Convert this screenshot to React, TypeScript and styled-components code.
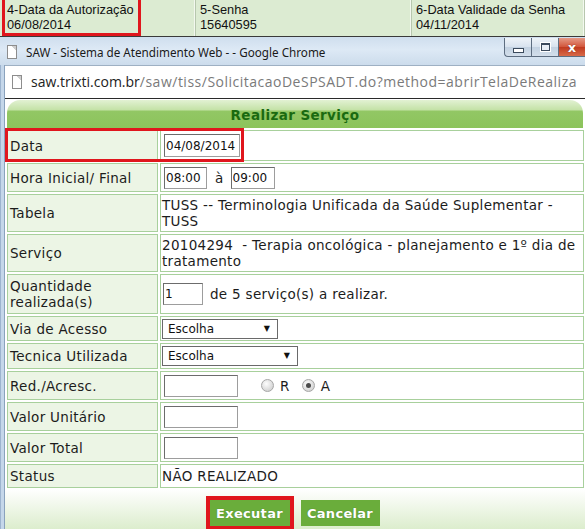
import styled, { createGlobalStyle } from 'styled-components';

const GlobalStyle = createGlobalStyle`
  html, body {
    margin: 0;
    padding: 0;
  }
  body {
    width: 585px;
    height: 529px;
    overflow: hidden;
    background: #fff;
    font-family: "DejaVu Sans", Verdana, sans-serif;
  }
`;

const rows = [
  { label: 'Tabela', h: 38, text: <>TUSS -- Terminologia Unificada da Saúde Suplementar -<br />TUSS</> },
  { label: 'Serviço', h: 38, text: <>20104294&nbsp; - Terapia oncológica - planejamento e 1º dia de<br />tratamento</> },
];

export default function App() {
  return (
    <Page>
      <GlobalStyle />
      <InfoStrip>
        <InfoCell $first>4-Data da Autorização<br />06/08/2014</InfoCell>
        <InfoCell>5-Senha<br />15640595</InfoCell>
        <InfoCell>6-Data Validade da Senha<br />04/11/2014</InfoCell>
      </InfoStrip>

      <Window>
        <TitleBar>
          <TitleText>
            <PageIcon />
            SAW - Sistema de Atendimento Web - - Google Chrome
          </TitleText>
          <Controls>
            <CtrlButton><MinGlyph /></CtrlButton>
            <CtrlButton><MaxGlyph /></CtrlButton>
            <CtrlButton $close><CloseGlyph>x</CloseGlyph></CtrlButton>
          </Controls>
        </TitleBar>

        <FrameBody>
          <AddressBar>
            <PageIcon />
            <Url>
              <span>saw.trixti.com.br</span>
              <UrlPath>/saw/tiss/SolicitacaoDeSPSADT.do?method=abrirTelaDeRealiza</UrlPath>
            </Url>
          </AddressBar>

          <Content>
            <Header>Realizar Serviço</Header>
            <FormTable>
              <tbody>
                <Row $h={31}>
                  <Label>Data</Label>
                  <Value><TextInput $w={76} $hh={23} defaultValue="04/08/2014" /></Value>
                </Row>
                <Row $h={29}>
                  <Label>Hora Inicial/ Final</Label>
                  <Value>
                    <TextInput $w={43} defaultValue="08:00" />
                    <Between>à</Between>
                    <TextInput $w={44} $m={0} defaultValue="09:00" />
                  </Value>
                </Row>
                {rows.map((r) => (
                  <Row key={r.label} $h={r.h}>
                    <Label>{r.label}</Label>
                    <Value>{r.text}</Value>
                  </Row>
                ))}
                <Row $h={40}>
                  <Label>Quantidade realizada(s)</Label>
                  <Value>
                    <TextInput $w={40} $m={1} defaultValue="1" />
                    <After>de 5 serviço(s) a realizar.</After>
                  </Value>
                </Row>
                <Row $h={25}>
                  <Label>Via de Acesso</Label>
                  <Value>
                    <SelectBox $w={116}>Escolha<Arrow>▼</Arrow></SelectBox>
                  </Value>
                </Row>
                <Row $h={26}>
                  <Label>Tecnica Utilizada</Label>
                  <Value>
                    <SelectBox $w={136}>Escolha<Arrow>▼</Arrow></SelectBox>
                  </Value>
                </Row>
                <Row $h={29}>
                  <Label>Red./Acresc.</Label>
                  <Value>
                    <TextInput $w={74} />
                    <RadioGroup>
                      <Radio />
                      <RadioLabel>R</RadioLabel>
                      <Radio $checked />
                      <RadioLabel>A</RadioLabel>
                    </RadioGroup>
                  </Value>
                </Row>
                <Row $h={29}>
                  <Label>Valor Unitário</Label>
                  <Value><TextInput $w={74} /></Value>
                </Row>
                <Row $h={29}>
                  <Label>Valor Total</Label>
                  <Value><TextInput $w={74} /></Value>
                </Row>
                <Row $h={24}>
                  <Label>Status</Label>
                  <Value>NÃO REALIZADO</Value>
                </Row>
              </tbody>
            </FormTable>
            <ButtonBar>
              <ActionButton $w={80} $highlight>Executar</ActionButton>
              <ActionButton $w={79}>Cancelar</ActionButton>
            </ButtonBar>
          </Content>
        </FrameBody>
      </Window>

      <Marker $left={2} $top={-3} $w={139} $h={39} />
      <Marker $left={5} $top={128} $w={239} $h={34} />
    </Page>
  );
}

const Page = styled.div`
  position: relative;
  width: 585px;
  height: 529px;
  overflow: hidden;
`;

/* tela de trás */
const InfoStrip = styled.div`
  display: grid;
  grid-template-columns: 196px 216px 1fr;
  height: 36px;
  background: #dcebd2;
  border-bottom: 1px solid #3a3a3a;
  font-family: "Liberation Sans", Arial, sans-serif;
  font-size: 12.8px;
  line-height: 15px;
  color: #111;
`;

const InfoCell = styled.div<{ $first?: boolean }>`
  padding: 2px 0 0 ${({ $first }) => ($first ? '7px' : '4px')};
  border-right: 1px solid #b7c7ae;
  box-shadow: inset -1px 0 0 #f3f8ef;
`;

const Window = styled.div`
  display: flex;
  flex-direction: column;
  height: 492px;
`;

const TitleBar = styled.div`
  display: flex;
  align-items: flex-start;
  height: 28px;
  background: linear-gradient(#cfdeee, #dde9f5 45%, #ccdcec);
`;

const TitleText = styled.div`
  display: flex;
  align-items: center;
  gap: 9px;
  padding: 7px 0 0 7px;
  font-family: "Noto Sans", sans-serif;
  font-size: 11.7px;
  color: #1a1a1a;
`;

const PageIcon = styled.span`
  display: inline-block;
  width: 8px;
  height: 12px;
  border: 1px solid #8d8d8d;
  background: linear-gradient(225deg, #cfcfcf 0 3px, #fff 3px);
  flex-shrink: 0;
`;

const Controls = styled.div`
  display: flex;
  margin-left: auto;
  margin-top: 1px;
`;

const CtrlButton = styled.div<{ $close?: boolean }>`
  display: flex;
  align-items: center;
  justify-content: center;
  box-sizing: border-box;
  width: 27px;
  height: 19px;
  border: 1px solid #5d6d80;
  border-top: none;
  border-right: none;
  background: ${({ $close }) =>
    $close
      ? 'linear-gradient(#e59a86, #d2553a 50%, #c03a1f 51%, #d86a48)'
      : 'linear-gradient(#eef3f8, #d7e2ee 50%, #c2d1e1 51%, #d3dfeb)'};
  &:first-child {
    border-bottom-left-radius: 4px;
  }
`;

const MinGlyph = styled.span`
  width: 9px;
  height: 3px;
  margin-top: 6px;
  border: 1px solid #3b4a5c;
  background: #fff;
`;

const MaxGlyph = styled.span`
  width: 7px;
  height: 5px;
  border: 1px solid #3b4a5c;
  border-top-width: 2px;
  background: #e9eff6;
  box-shadow: 0 0 0 1px #fff;
`;

const CloseGlyph = styled.span`
  font-family: "DejaVu Sans", sans-serif;
  font-weight: bold;
  font-size: 13px;
  line-height: 13px;
  color: #fff;
  text-shadow: 0 0 1px #5a1a0c;
`;

const FrameBody = styled.div`
  flex: 1;
  display: flex;
  flex-direction: column;
  padding-left: 5px;
  background: linear-gradient(to right, #9db4cf 0 1px, #c5d7ea 1px 4px, #8aa2bd 4px 5px);
`;

const AddressBar = styled.div`
  display: flex;
  align-items: center;
  gap: 9px;
  box-sizing: border-box;
  height: 34px;
  padding: 0 0 1px 7px;
  background: #fff;
  border-top: 1px solid #9eb0c3;
  border-bottom: 1px solid #2a2a2a;
  overflow: hidden;
`;

const Url = styled.div`
  width: 548px;
  overflow: hidden;
  white-space: nowrap;
  font-family: "Open Sans", sans-serif;
  font-size: 14px;
  color: #222;
`;

const UrlPath = styled.span`
  color: #7a7a7a;
  letter-spacing: 0.5px;
`;

const Content = styled.div`
  flex: 1;
  display: flex;
  flex-direction: column;
  background: linear-gradient(#fff 0, #fff 390px, #dcedcd 100%);
`;

const Header = styled.div`
  display: flex;
  align-items: center;
  justify-content: center;
  height: 28px;
  margin: 1px 2px 0 2px;
  padding-top: 2px;
  box-sizing: border-box;
  border-radius: 13px 13px 0 0;
  background: linear-gradient(#e2f1d3 0, #c4e2a7 35%, #92c764 40%, #8cc35c 100%);
  font-weight: bold;
  font-size: 13.5px;
  letter-spacing: 0.4px;
  color: #1a6a10;
`;

const FormTable = styled.table`
  width: 581px;
  table-layout: fixed;
  border-collapse: separate;
  border-spacing: 2px;
  font-size: 13.5px;
  letter-spacing: 0.3px;
  color: #1c1c1c;
  line-height: 16px;
`;

const Row = styled.tr<{ $h: number }>`
  height: ${({ $h }) => $h}px;
`;

const Label = styled.td`
  width: 151px;
  box-sizing: border-box;
  padding: 0 2px;
  background: #ecf5e5;
  border: 1px solid #a8d09c;
  vertical-align: middle;
`;

const Value = styled.td`
  padding: 0 1px;
  background: #fff;
  border: 1px solid #a8d09c;
  vertical-align: middle;
  white-space: nowrap;
`;

const TextInput = styled.input<{ $w: number; $hh?: number; $m?: number }>`
  box-sizing: border-box;
  width: ${({ $w }) => $w}px;
  height: ${({ $hh }) => $hh ?? 22}px;
  margin: 0 0 0 ${({ $m }) => $m ?? 2}px;
  padding: 0 1px;
  border: 1px solid;
  border-color: #6c6c6c #9d9d9d #9d9d9d #6c6c6c;
  background: #fff;
  font-family: "DejaVu Sans", Verdana, sans-serif;
  font-size: 12px;
  letter-spacing: 0;
  color: #111;
  vertical-align: middle;
  outline: none;
`;

const Between = styled.span`
  display: inline-block;
  margin: 0 7px 0 8px;
  vertical-align: middle;
`;

const After = styled.span`
  margin-left: 7px;
  vertical-align: middle;
`;

const SelectBox = styled.div<{ $w: number }>`
  display: inline-flex;
  align-items: center;
  box-sizing: border-box;
  width: ${({ $w }) => $w}px;
  height: 20px;
  padding-left: 5px;
  border: 1px solid #6a6a6a;
  background: #fff;
  font-size: 12px;
  letter-spacing: 0;
  color: #111;
  vertical-align: middle;
`;

const Arrow = styled.span`
  margin: 0 7px 0 auto;
  font-size: 8px;
  color: #111;
`;

const RadioGroup = styled.span`
  display: inline-flex;
  align-items: center;
  margin-left: 23px;
  vertical-align: middle;
`;

const Radio = styled.span<{ $checked?: boolean }>`
  position: relative;
  width: 13px;
  height: 13px;
  box-sizing: border-box;
  border-radius: 50%;
  border: 1px solid #a6a6a6;
  background: radial-gradient(circle at 40% 35%, #fdfdfd, #d4d4d4 75%);
  &::after {
    content: '';
    display: ${({ $checked }) => ($checked ? 'block' : 'none')};
    position: absolute;
    left: 3px;
    top: 3px;
    width: 5px;
    height: 5px;
    border-radius: 50%;
    background: #4b4b4b;
  }
`;

const RadioLabel = styled.span`
  margin: 0 12px 0 6px;
`;

const ButtonBar = styled.div`
  display: flex;
  justify-content: center;
  gap: 11px;
  padding-top: 10px;
  padding-right: 1px;
`;

const ActionButton = styled.button<{ $w: number; $highlight?: boolean }>`
  width: ${({ $w }) => $w}px;
  height: 26px;
  padding: 0;
  border: none;
  background: #6aad3b;
  color: #fff;
  font-family: "DejaVu Sans", Verdana, sans-serif;
  font-weight: bold;
  font-size: 13px;
  letter-spacing: 0.3px;
  text-shadow: 0 0 1px rgba(40, 70, 20, 0.5);
  outline: ${({ $highlight }) => ($highlight ? '4px solid #e0161d' : 'none')};
`;

/* marcações vermelhas */
const Marker = styled.div<{ $left: number; $top: number; $w: number; $h: number }>`
  position: absolute;
  left: ${({ $left }) => $left}px;
  top: ${({ $top }) => $top}px;
  width: ${({ $w }) => $w}px;
  height: ${({ $h }) => $h}px;
  box-sizing: border-box;
  border: 3px solid #e0161d;
  pointer-events: none;
`;
